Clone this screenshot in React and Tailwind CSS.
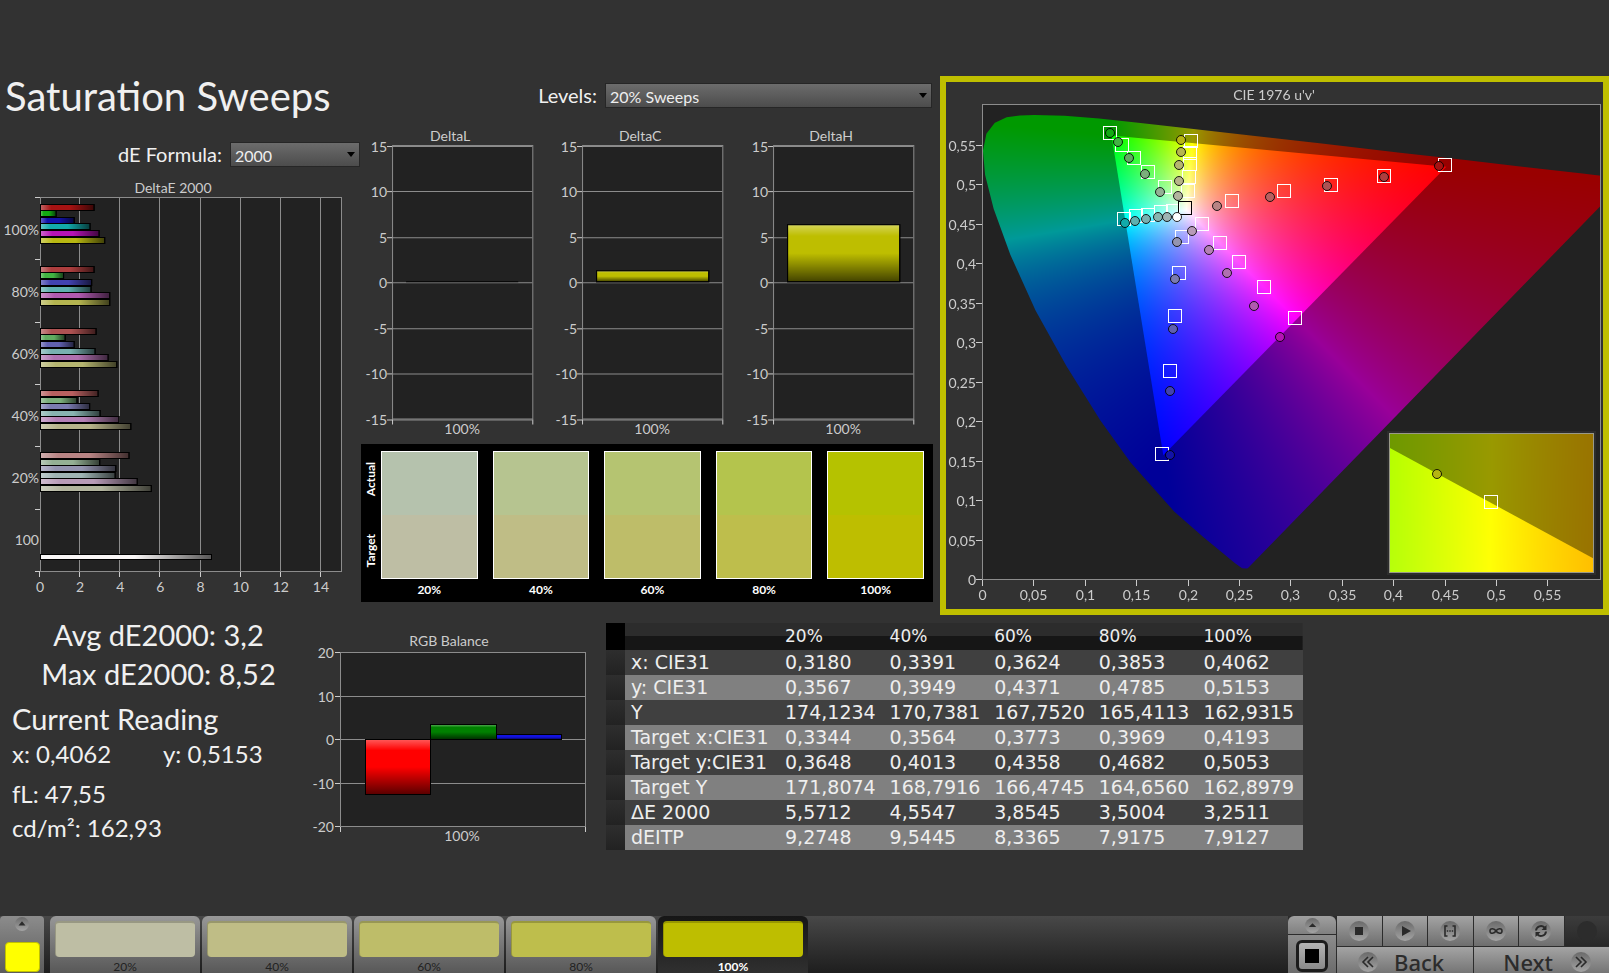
import { useEffect, useRef, useState } from "react";

// bar / marker colors, one list per saturation level
const SWEEP_COLORS = {
  20: ["#b88484", "#94b094", "#9494b0", "#9fb4b4", "#b89bb8", "#b2b49e"],
  40: ["#b86060", "#7bae7b", "#7b7bb0", "#88b4b0", "#b580b5", "#b8b48a"],
  60: ["#ad5252", "#60ac60", "#6060b0", "#78b0b0", "#b070b0", "#b5b570"],
  80: ["#ad3e3e", "#42b342", "#4242b0", "#5eb0b0", "#b05ab0", "#b5b550"],
  100: ["#a51212", "#12ab12", "#1212a8", "#12aaaa", "#b512b5", "#b8b812"],
};

const DELTA_E = [
  { label: "100%", level: 100, values: [2.72, 0.83, 1.73, 2.52, 2.97, 3.25] },
  { label: "80%", level: 80, values: [2.72, 1.2, 2.6, 2.57, 3.5, 3.5] },
  { label: "60%", level: 60, values: [2.82, 1.28, 1.73, 2.77, 3.42, 3.85] },
  { label: "40%", level: 40, values: [2.92, 1.87, 2.5, 3.02, 3.96, 4.55] },
  { label: "20%", level: 20, values: [4.46, 3.0, 3.8, 3.77, 4.87, 5.57] },
  { label: "100", level: 0, values: [] },
];

const SWATCHES = [
  { label: "20%", actual: "#b5c2ad", target: "#bebea4" },
  { label: "40%", actual: "#b6c490", target: "#bfbd86" },
  { label: "60%", actual: "#b5c471", target: "#bebd69" },
  { label: "80%", actual: "#b4c44d", target: "#bebe4c" },
  { label: "100%", actual: "#b5c200", target: "#bebe00" },
];

const ROWS = [
  ["x: CIE31", "0,3180", "0,3391", "0,3624", "0,3853", "0,4062"],
  ["y: CIE31", "0,3567", "0,3949", "0,4371", "0,4785", "0,5153"],
  ["Y", "174,1234", "170,7381", "167,7520", "165,4113", "162,9315"],
  ["Target x:CIE31", "0,3344", "0,3564", "0,3773", "0,3969", "0,4193"],
  ["Target y:CIE31", "0,3648", "0,4013", "0,4358", "0,4682", "0,5053"],
  ["Target Y", "171,8074", "168,7916", "166,4745", "164,6560", "162,8979"],
  ["ΔE 2000", "5,5712", "4,5547", "3,8545", "3,5004", "3,2511"],
  ["dEITP", "9,2748", "9,5445", "8,3365", "7,9175", "7,9127"],
];

// spectral locus, CIE 1931 x/y
const LOCUS = [
  [0.1741, 0.005], [0.1714, 0.0051], [0.1689, 0.0069], [0.1644, 0.0109], [0.1566, 0.0177],
  [0.144, 0.0297], [0.1241, 0.0578], [0.1096, 0.0868], [0.0913, 0.1327], [0.0687, 0.2007],
  [0.0454, 0.295], [0.0235, 0.4127], [0.0082, 0.5384], [0.0039, 0.6548], [0.0139, 0.7502],
  [0.0389, 0.812], [0.0743, 0.8338], [0.1142, 0.8262], [0.1547, 0.8059], [0.2296, 0.7543],
  [0.3016, 0.6923], [0.3731, 0.6245], [0.4441, 0.5547], [0.5125, 0.4866], [0.5752, 0.4242],
  [0.627, 0.3725], [0.6658, 0.334], [0.6915, 0.3083], [0.719, 0.2809], [0.7347, 0.2653],
].map(([x, y]) => {
  const d = -2 * x + 12 * y + 3;
  return [(4 * x) / d, (9 * y) / d];
});

const GAMUT = [[0.4507, 0.5229], [0.125, 0.5625], [0.1754, 0.1579]];

// order of hues: red, green, blue, cyan, magenta, yellow (20% to 100% each)
const TARGETS = [
  [[286, 119], [338, 109], [385, 103], [438, 94], [499, 83]],
  [[219, 105], [202, 90], [188, 76], [176, 63], [164, 51]],
  [[236, 155], [233, 191], [229, 234], [224, 289], [216, 372]],
  [[227, 129], [215, 130], [202, 133], [190, 134], [178, 137]],
  [[256, 142], [274, 161], [293, 180], [318, 205], [349, 236]],
  [[242, 109], [243, 95], [244, 82], [244, 71], [245, 59]],
];
const ACTUALS = [
  [[271, 124], [324, 115], [381, 104], [438, 95], [493, 84]],
  [[214, 110], [199, 92], [183, 76], [172, 60], [164, 51]],
  [[231, 160], [229, 197], [227, 247], [224, 309], [224, 373]],
  [[221, 135], [212, 135], [200, 137], [189, 139], [179, 141]],
  [[246, 149], [263, 168], [281, 191], [308, 224], [334, 255]],
  [[232, 114], [233, 99], [233, 83], [235, 70], [235, 58]],
];
const LEVELS = [20, 40, 60, 80, 100];

function chromaColor(u, v, gain) {
  const X = 9 * u;
  const Y = 4 * v;
  const Z = 12 - 3 * u - 20 * v;
  const rgb = [
    3.2406 * X - 1.5372 * Y - 0.4986 * Z,
    -0.9689 * X + 1.8758 * Y + 0.0415 * Z,
    0.0557 * X - 0.204 * Y + 1.057 * Z,
  ];
  const max = Math.max(...rgb);
  return rgb.map((c) => (255 * gain * Math.max(c, 0)) / max);
}

// paints the chromaticity colors of one u'v' window into a rect of the canvas
function paintChroma(ctx, rect, range) {
  const { x, y, w, h } = rect;
  const toX = (u) => ((u - range.u0) / (range.u1 - range.u0)) * w;
  const toY = (v) => h - ((v - range.v0) / (range.v1 - range.v0)) * h;

  const makeBuffer = () => {
    const buffer = document.createElement("canvas");
    buffer.width = w;
    buffer.height = h;
    return buffer;
  };

  const drawLayer = (points, gain, outline) => {
    const colors = makeBuffer();
    const cctx = colors.getContext("2d");
    const img = cctx.createImageData(w, h);
    for (let j = 0; j < h; j++) {
      const v = range.v1 - ((j + 0.5) / h) * (range.v1 - range.v0);
      for (let i = 0; i < w; i++) {
        const u = range.u0 + ((i + 0.5) / w) * (range.u1 - range.u0);
        const [r, g, b] = chromaColor(u, v, gain);
        const k = (j * w + i) * 4;
        img.data[k] = r;
        img.data[k + 1] = g;
        img.data[k + 2] = b;
        img.data[k + 3] = 255;
      }
    }
    cctx.putImageData(img, 0, 0);

    const shape = makeBuffer();
    const sctx = shape.getContext("2d");
    sctx.beginPath();
    points.forEach(([u, v]) => sctx.lineTo(toX(u), toY(v)));
    sctx.closePath();
    sctx.fill();
    if (outline) {
      sctx.lineWidth = outline;
      sctx.lineJoin = "round";
      sctx.stroke();
    }
    sctx.globalCompositeOperation = "source-in";
    sctx.drawImage(colors, 0, 0);
    ctx.drawImage(shape, x, y);
  };

  ctx.fillStyle = "#222222";
  ctx.fillRect(x, y, w, h);
  drawLayer(LOCUS, 0.6, 3);
  drawLayer(GAMUT, 1, 0);
}

function GlossDefs() {
  return (
    <svg className="absolute h-0 w-0" aria-hidden="true">
      <defs>
        <linearGradient id="gloss-h" x1="0" x2="1" y1="0" y2="0">
          <stop offset="0" stopColor="#fff" stopOpacity="0.35" />
          <stop offset="0.2" stopColor="#fff" stopOpacity="0" />
          <stop offset="0.55" stopColor="#000" stopOpacity="0" />
          <stop offset="1" stopColor="#000" stopOpacity="0.65" />
        </linearGradient>
        <linearGradient id="gloss-v" x1="0" x2="0" y1="0" y2="1">
          <stop offset="0" stopColor="#fff" stopOpacity="0.35" />
          <stop offset="0.2" stopColor="#fff" stopOpacity="0" />
          <stop offset="0.5" stopColor="#000" stopOpacity="0" />
          <stop offset="1" stopColor="#000" stopOpacity="0.65" />
        </linearGradient>
      </defs>
    </svg>
  );
}

function Bar({ x, y, width, height, color, gloss = "url(#gloss-v)" }) {
  return (
    <g stroke="#000">
      <rect x={x} y={y} width={width} height={height} fill={color} />
      <rect x={x} y={y} width={width} height={height} fill={gloss} />
    </g>
  );
}

function DeltaEChart() {
  const scale = 20.07;
  return (
    <svg viewBox="0 0 360 425" className="mt-2 block w-full fill-[#cccccc] text-[14px]">
      <text x="173" y="18" textAnchor="middle">DeltaE 2000</text>
      <rect x="40.5" y="22.5" width="301" height="374" fill="#222222" stroke="#8c8c8c" />
      {[2, 4, 6, 8, 10, 12, 14].map((n) => (
        <path key={n} d={`M${Math.round(40 + n * scale) - 0.5} 23V396`} stroke="#8c8c8c" />
      ))}
      {[0, 2, 4, 6, 8, 10, 12, 14].map((n) => (
        <g key={n}>
          <path d={`M${Math.round(40 + n * scale) - 0.5} 397v5`} stroke="#cccccc" />
          <text x={40 + n * scale} y="417" textAnchor="middle">{n}</text>
        </g>
      ))}
      {[0, 1, 2, 3, 4, 5, 6].map((n) => (
        <path key={n} d={`M35 ${Math.round(22 + n * 62.3) + 0.5}h5`} stroke="#cccccc" />
      ))}
      {DELTA_E.map((group, g) => (
        <g key={group.label}>
          <text x="39" y={60 + g * 62} textAnchor="end">{group.label}</text>
          {group.values.map((value, i) => (
            <Bar
              key={i}
              x={40.5}
              y={Math.round(28.6 + g * 62.1 + i * 6.6) + 0.5}
              width={value * scale - 1}
              height={6}
              color={SWEEP_COLORS[group.level][i]}
              gloss="url(#gloss-h)"
            />
          ))}
        </g>
      ))}
      <Bar x={40.5} y={379.5} width={171} height={5} color="#f8f5f5" gloss="url(#gloss-h)" />
    </svg>
  );
}

function DeltaChart({ title, value }) {
  const height = Math.round(value * 9);
  return (
    <svg viewBox="0 0 190 315" className="block w-full fill-[#cccccc] text-[14px]">
      <text x="88" y="16" textAnchor="middle">{title}</text>
      <rect x="30.5" y="20.5" width="140" height="273" fill="#222222" stroke="#8c8c8c" />
      {[15, 10, 5, 0, -5, -10, -15].map((n, i) => {
        const y = Math.round(20.5 + i * 45.5) + 0.5;
        return (
          <g key={n}>
            <path d={`M30 ${y}h140`} stroke="#8c8c8c" />
            <path d={`M25 ${y}h5`} stroke="#cccccc" />
            <text x="25" y={y + 5} textAnchor="end">{n}</text>
          </g>
        );
      })}
      <path d="M30.5 294v5M170.5 294v5" stroke="#cccccc" />
      {height > 0 ? (
        <Bar x={44.5} y={156.5 - height} width={112} height={height} color="#bebe00" />
      ) : (
        <path d="M44 156.500h112" stroke="#000" />
      )}
      <text x="100" y="308" textAnchor="middle">100%</text>
    </svg>
  );
}

function RgbBalance() {
  return (
    <svg viewBox="0 0 301 235" className="block w-full fill-[#cccccc] text-[14px]">
      <text x="144" y="31" textAnchor="middle">RGB Balance</text>
      <rect x="35.5" y="37.5" width="245" height="174" fill="#222222" stroke="#8c8c8c" />
      {[20, 10, 0, -10, -20].map((n, i) => {
        const y = Math.round(37 + i * 43.5) + 0.5;
        return (
          <g key={n}>
            <path d={`M35 ${y}h245`} stroke="#8c8c8c" />
            <path d={`M30 ${y}h5`} stroke="#cccccc" />
            <text x="29" y={y + 5} textAnchor="end">{n}</text>
          </g>
        );
      })}
      <path d="M35.5 212v5M280.5 212v5" stroke="#cccccc" />
      <Bar x={60.5} y={124.5} width={65} height={55} color="#ff0000" />
      <Bar x={125.5} y={109.5} width={66} height={15} color="#008000" />
      <Bar x={191.5} y={119.5} width={65} height={5} color="#1212e0" />
      <text x="157" y="226" textAnchor="middle">100%</text>
    </svg>
  );
}

function Marker({ x, y, color }) {
  return <circle cx={x} cy={y} r="4.5" fill={color} stroke="#000" strokeOpacity="0.85" />;
}

function CieChart() {
  const canvasRef = useRef(null);

  useEffect(() => {
    const ctx = canvasRef.current.getContext("2d");
    paintChroma(ctx, { x: 37, y: 23, w: 618, h: 475 }, { u0: 0, u1: 0.6012, v0: 0, v1: 0.6012 });
    ctx.fillStyle = "#2c2c2c";
    ctx.fillRect(441, 349, 209, 144);
    paintChroma(ctx, { x: 443, y: 351, w: 205, h: 140 }, { u0: 0.1854, u1: 0.2226, v0: 0.55005, v1: 0.55575 });
  }, []);

  return (
    <div className="relative border-[6px] border-[#bfbf00]">
      <canvas ref={canvasRef} width="657" height="527" className="absolute inset-0 h-full w-full" />
      <svg viewBox="0 0 657 527" className="relative block w-full fill-[#cccccc] text-[14px]">
        <text x="328" y="18" textAnchor="middle">CIE 1976 u'v'</text>
        <rect x="36.5" y="22.5" width="618" height="475" fill="none" stroke="#8c8c8c" />
        {[0, 1, 2, 3, 4, 5, 6, 7, 8, 9, 10, 11].map((n) => {
          const label = String(n * 5 / 100).replace(".", ",");
          const x = Math.round(36 + n * 51.4) + 0.5;
          const y = Math.round(497 - n * 39.5) + 0.5;
          return (
            <g key={n}>
              <path d={`M${x} 498v6M30 ${y}h6`} stroke="#cccccc" />
              <text x={x} y="518" textAnchor="middle">{label}</text>
              <text x="30" y={y + 5} textAnchor="end">{label}</text>
            </g>
          );
        })}
        {TARGETS.flat().map(([x, y]) => (
          <rect key={`${x}-${y}`} x={x - 6.5} y={y - 6.5} width="13" height="13" fill="none" stroke="#fff" />
        ))}
        <rect x="232.5" y="119.5" width="13" height="13" fill="none" stroke="#000" />
        {ACTUALS.map((points, hue) =>
          points.map(([x, y], i) => (
            <Marker key={`${hue}-${i}`} x={x} y={y} color={SWEEP_COLORS[LEVELS[i]][hue]} />
          ))
        )}
        <Marker x={231} y={135} color="#ffffff" />
        <rect x="443.5" y="351.5" width="204" height="139" fill="none" stroke="#999988" />
        <rect x="538.5" y="413.5" width="13" height="13" fill="none" stroke="#fff" />
        <Marker x={491} y={392} color="#b5b512" />
      </svg>
    </div>
  );
}

function Dropdown({ id, label, value, onChange, options, className }) {
  return (
    <div className="flex items-center justify-end gap-2">
      <label htmlFor={id} className="text-[20px] leading-[25px]">{label}</label>
      <div className={`relative ${className}`}>
        <select
          id={id}
          value={value}
          onChange={(e) => onChange(e.target.value)}
          className="block h-[25px] w-full appearance-none border border-[#262626] bg-linear-to-b from-[#6c6c6c] to-[#4c4c4c] px-1 pt-px text-[16px] leading-[23px] text-[#eeeeee]"
        >
          {options.map((o) => (
            <option key={o}>{o}</option>
          ))}
        </select>
        <svg viewBox="0 0 8 5" className="pointer-events-none absolute top-[10px] right-[5px] h-[5px] w-2">
          <path d="M0 0h8L4 5z" fill="#000" />
        </svg>
      </div>
    </div>
  );
}

function SwatchPanel() {
  return (
    <div className="mt-[3px] mr-[7px] ml-px flex h-[158px] bg-black pt-[7px] pr-[9px] text-[12px] font-bold text-white">
      <div className="flex h-[128px] w-5 flex-col items-center justify-between py-[11px]">
        <span className="rotate-180 leading-4 [writing-mode:vertical-rl]">Actual</span>
        <span className="rotate-180 leading-4 [writing-mode:vertical-rl]">Target</span>
      </div>
      <div className="grid flex-1 grid-cols-5 gap-[15px]">
        {SWATCHES.map((s) => (
          <div key={s.label} className="text-center">
            <div className="flex h-[128px] flex-col border border-white">
              <div className="flex-1" style={{ background: s.actual }} />
              <div className="flex-1" style={{ background: s.target }} />
            </div>
            <div className="leading-[22px]">{s.label}</div>
          </div>
        ))}
      </div>
    </div>
  );
}

function Readings() {
  return (
    <div className="pl-3 text-[#f0f0f0]">
      <div className="text-center text-[29px] leading-[39px]">
        <p>Avg dE2000: 3,2</p>
        <p>Max dE2000: 8,52</p>
      </div>
      <h2 className="mt-2 text-[29px] leading-9">Current Reading</h2>
      <div className="text-[24px] leading-[34px]">
        <p className="flex">
          <span className="w-[151px]">x: 0,4062</span>
          <span>y: 0,5153</span>
        </p>
        <p className="mt-[6px]">fL: 47,55</p>
        <p>cd/m²: 162,93</p>
      </div>
    </div>
  );
}

function ReadingsTable() {
  return (
    <table className="mt-2 w-full table-fixed self-start font-['DejaVu_Sans'] text-[19px] text-[#eeeeee]">
      <colgroup>
        <col className="w-[19px]" />
        <col className="w-[155px]" />
        <col span="5" />
      </colgroup>
      <thead>
        <tr className="h-[27px] bg-[linear-gradient(#2c2c2c_50%,#161616_50%)] text-left text-[17px] leading-[25px]">
          <td className="bg-black" />
          <td />
          {LEVELS.map((l) => (
            <th key={l} scope="col" className="pl-[5px] font-normal">{l}%</th>
          ))}
        </tr>
      </thead>
      <tbody>
        {ROWS.map(([name, ...cells]) => (
          <tr key={name} className="h-[25px] bg-[#404040] leading-[25px] whitespace-nowrap even:bg-[#808080]">
            <td className="bg-linear-to-b from-[#2e2e2e] to-[#222222]" />
            <th scope="row" className="pl-[6px] text-left font-normal">{name}</th>
            {cells.map((c, i) => (
              <td key={i} className="pl-[5px]">{c}</td>
            ))}
          </tr>
        ))}
      </tbody>
    </table>
  );
}

function RoundIcon({ children, className = "h-5 w-5" }) {
  return (
    <svg viewBox="0 0 20 20" className={className}>
      <defs>
        <linearGradient id="knob" x1="0" x2="0" y1="0" y2="1">
          <stop offset="0" stopColor="#6a6a6a" />
          <stop offset="1" stopColor="#a4a4a4" />
        </linearGradient>
      </defs>
      <circle cx="10" cy="10" r="10" fill="url(#knob)" />
      <g fill="none" stroke="#2a2a2a" strokeWidth="1.6">{children}</g>
    </svg>
  );
}

const TRANSPORT = [
  { name: "Stop", icon: <path d="M6 6h8v8H6z" fill="#2a2a2a" stroke="none" /> },
  { name: "Play", icon: <path d="M7 5l9 5-9 5z" fill="#2a2a2a" stroke="none" /> },
  {
    name: "Read series",
    icon: <path d="M7.500 5H5v10h2.500M12.500 5H15v10h-2.500M6.800 10h1.400M9.300 10h1.400M11.800 10h1.400" />,
  },
  {
    name: "Read continuously",
    icon: <path d="M10 10C8.500 7.500 4 6.500 4 10s4.500 2.500 6 0 6-3.500 6 0-4.500 2.500-6 0z" />,
  },
  {
    name: "Refresh",
    icon: (
      <>
        <path d="M5 9.500a5 5 0 0 1 8.500-3M15 10.500a5 5 0 0 1-8.500 3" strokeWidth="2" />
        <path d="M15.500 4v5h-5zM4.500 16v-5h5z" fill="#2a2a2a" stroke="none" />
      </>
    ),
  },
];

function Footer({ selected, onSelect }) {
  return (
    <footer className="mt-auto flex h-[57px] shrink-0 overflow-hidden bg-linear-to-b from-[#484848] to-[#1e1e1e]">
      <button aria-label="Show patterns" className="mr-[6px] flex w-11 flex-col items-center rounded-t-sm bg-linear-to-b from-[#8c8c8c] to-[#5c5c5c] pt-[1px]">
        <RoundIcon className="h-[14px] w-[14px]">
          <path d="M5 12l5-6 5 6z" fill="#2a2a2a" stroke="none" />
        </RoundIcon>
        <span className="mt-[11px] h-[30px] w-[35px] rounded-sm border border-[#c0c000] bg-[#ffff00]" />
      </button>
      <div className="flex gap-[2px]">
        {SWATCHES.map((s) => (
          <button
            key={s.label}
            onClick={() => onSelect(s.label)}
            className={
              selected === s.label
                ? "w-[150px] rounded-t-md bg-linear-to-b from-[#161616] to-[#303030] px-[5px] pt-[5px] text-[12px] font-bold text-white"
                : "w-[150px] rounded-t-md bg-linear-to-b from-[#989898] to-[#585858] px-[5px] pt-[5px] text-[12px] text-[#222222]"
            }
          >
            <span className="block h-9 rounded-[4px] border-t-2 border-l border-black/20" style={{ background: s.target }} />
            <span className="block leading-5">{s.label}</span>
          </button>
        ))}
      </div>

      <div className="ml-auto flex gap-px bg-[#2c2c2c]">
        <div className="flex w-12 flex-col gap-px">
          <button aria-label="Expand" className="flex h-[18px] items-center justify-center rounded-t-md bg-linear-to-b from-[#a0a0a0] to-[#808080]">
            <RoundIcon className="h-[15px] w-[15px]">
              <path d="M5 12l5-5 5 5z" fill="#2a2a2a" stroke="none" />
            </RoundIcon>
          </button>
          <button aria-label="Stop pattern" className="flex flex-1 justify-center bg-linear-to-b from-[#8c8c8c] to-[#6c6c6c] pt-[5px]">
            <span className="flex h-8 w-8 items-center justify-center rounded-md border-[3px] border-[#1c1c1c] bg-linear-to-b from-[#b4b4b4] to-[#8a8a8a]">
              <span className="h-[14px] w-[14px] bg-black" />
            </span>
          </button>
        </div>
        <div className="grid w-[272px] auto-rows-[30px] grid-cols-6 gap-px">
          {TRANSPORT.map((t) => (
            <button key={t.name} aria-label={t.name} className="flex items-center justify-center bg-linear-to-b from-[#a4a4a4] to-[#6e6e6e]">
              <RoundIcon>{t.icon}</RoundIcon>
            </button>
          ))}
          <div className="flex items-center justify-center bg-linear-to-b from-[#3c3c3c] to-[#282828]">
            <span className="h-5 w-5 rounded-full bg-[#2c2c2c]" />
          </div>
          <button className="col-span-3 flex items-center gap-4 bg-linear-to-b from-[#a4a4a4] to-[#6e6e6e] pl-[21px] font-['Noto_Sans'] text-[22px] leading-[30px] font-medium text-[#2c2c2c]">
            <RoundIcon>
              <path d="M10 5l-5 5 5 5M15 5l-5 5 5 5" />
            </RoundIcon>
            Back
          </button>
          <button className="col-span-3 flex items-center justify-end gap-[18px] bg-linear-to-b from-[#a4a4a4] to-[#6e6e6e] pr-[18px] font-['Noto_Sans'] text-[22px] leading-[30px] font-medium text-[#2c2c2c]">
            Next
            <RoundIcon>
              <path d="M5 5l5 5-5 5M10 5l5 5-5 5" />
            </RoundIcon>
          </button>
        </div>
      </div>
    </footer>
  );
}

export default function App() {
  const [formula, setFormula] = useState("2000");
  const [levels, setLevels] = useState("20% Sweeps");
  const [selected, setSelected] = useState("100%");

  return (
    <div className="flex min-h-screen flex-col bg-[#323232] font-[Lato,sans-serif] text-[#f0f0f0]">
      <GlossDefs />
      <main className="pt-[76px]">
        <section className="grid grid-cols-[minmax(0,360fr)_minmax(0,580fr)_minmax(0,669fr)] items-start">
          <div>
            <h1 className="pl-[5px] text-[40px] leading-10 whitespace-nowrap">Saturation Sweeps</h1>
            <div className="mt-[26px]">
              <Dropdown
                id="formula"
                label="dE Formula:"
                value={formula}
                onChange={setFormula}
                options={["2000", "1994", "1976"]}
                className="w-[130px]"
              />
            </div>
            <DeltaEChart />
          </div>
          <div>
            <div className="mt-[7px] pr-2">
              <Dropdown
                id="levels"
                label="Levels:"
                value={levels}
                onChange={setLevels}
                options={["20% Sweeps", "25% Sweeps"]}
                className="w-[327px]"
              />
            </div>
            <div className="mt-[17px] mr-[7px] ml-[2px] grid grid-cols-3">
              <DeltaChart title="DeltaL" value={0} />
              <DeltaChart title="DeltaC" value={1.25} />
              <DeltaChart title="DeltaH" value={6.3} />
            </div>
            <SwatchPanel />
          </div>
          <CieChart />
        </section>
        <section className="grid grid-cols-[minmax(0,305fr)_minmax(0,301fr)_minmax(0,697fr)_minmax(0,306fr)]">
          <Readings />
          <RgbBalance />
          <ReadingsTable />
        </section>
      </main>
      <Footer selected={selected} onSelect={setSelected} />
    </div>
  );
}
